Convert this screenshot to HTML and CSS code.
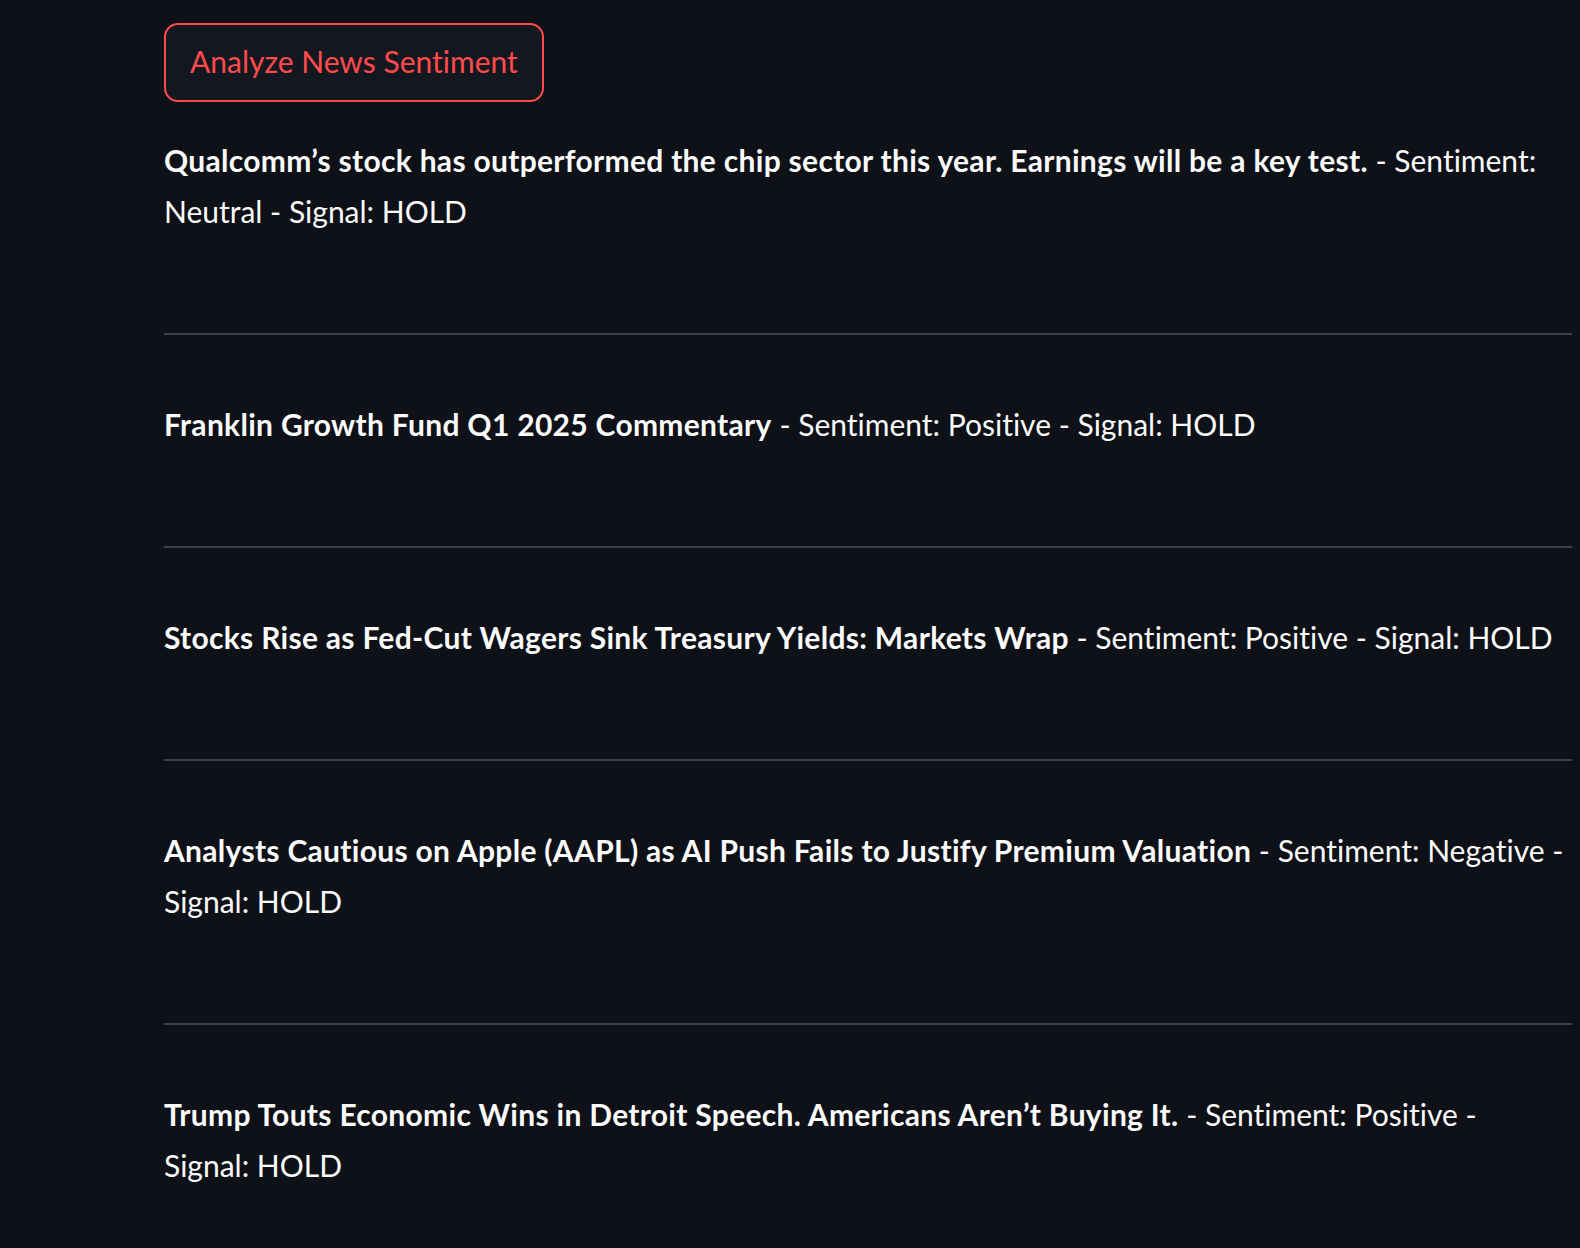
FILE: index.html
```html
<!DOCTYPE html>
<html lang="en">
<head>
<meta charset="utf-8">
<title>News Sentiment</title>
<link rel="stylesheet" href="styles.css">
</head>
<body>
<main class="page">
  <button class="btn" type="button">Analyze News Sentiment</button>
  <section class="news">
    <p class="item"><strong>Qualcomm’s stock has outperformed the chip sector this year. Earnings will be a key test.</strong> - Sentiment: Neutral - Signal: HOLD</p>
    <hr class="divider">
    <p class="item"><strong>Franklin Growth Fund Q1 2025 Commentary</strong> - Sentiment: Positive - Signal: HOLD</p>
    <hr class="divider">
    <p class="item"><strong>Stocks Rise as Fed-Cut Wagers Sink Treasury Yields: Markets Wrap</strong> - Sentiment: Positive - Signal: HOLD</p>
    <hr class="divider">
    <p class="item"><strong>Analysts Cautious on Apple (AAPL) as AI Push Fails to Justify Premium Valuation</strong> - Sentiment: Negative - Signal: HOLD</p>
    <hr class="divider">
    <p class="item"><strong>Trump Touts Economic Wins in Detroit Speech. Americans Aren’t Buying It.</strong> - Sentiment: Positive - Signal: HOLD</p>
  </section>
</main>
</body>
</html>
```

FILE: styles.css
```css
html, body {
  margin: 0;
  padding: 0;
  background: #0e1117;
}

body {
  font-family: "Lato", "Noto Sans", sans-serif;
  color: #fafafa;
  font-variant-ligatures: none;
}

.page {
  padding: 23px 8px 0 164px;
}

.btn {
  display: block;
  height: 79px;
  padding: 0 24px 3px;
  background: #131720;
  color: #ff4b4b;
  border: 2px solid #ff4b4b;
  border-radius: 14px;
  font-family: inherit;
  font-size: 30px;
  line-height: 1;
  font-variant-ligatures: none;
  cursor: pointer;
}

.news {
  margin-top: 33px;
}

.item {
  margin: 0;
  padding-right: 5px;
  font-size: 30px;
  line-height: 51px;
}

.item strong {
  font-weight: 700;
  letter-spacing: 0.3px;
}

.divider {
  margin: 96px 0 64px;
  border: 0;
  height: 2px;
  background: #3d4047;
}
```
